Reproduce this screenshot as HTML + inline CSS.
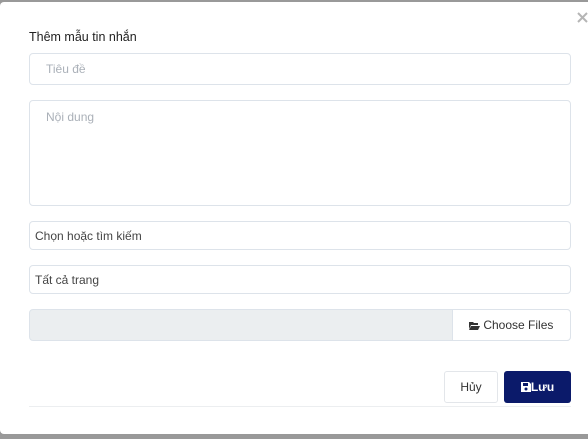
<!DOCTYPE html>
<html><head><meta charset="utf-8"><style>
*{box-sizing:border-box;margin:0;padding:0}
body{width:588px;height:439px;background:#999;font-family:"Liberation Sans",Arial,sans-serif;position:relative;overflow:hidden}
.m{position:absolute;left:0;top:2px;width:600px;height:432px;background:#fff;border-radius:4px}
.a{position:absolute;font-size:12px}
.in{position:absolute;left:29px;width:542px;border:1px solid #dde3ea;border-radius:4px;background:#fff;color:#444;font-size:12px}
.ph{color:#aab0b8}
</style></head><body>
<div class="m"></div>
<svg style="position:absolute;left:577px;top:12px" width="11" height="11" viewBox="0 0 11 11"><path d="M1 1L10 10M10 1L1 10" stroke="#b5b5b5" stroke-width="2"/></svg>
<div class="a" style="left:29px;top:30px;font-size:12.5px;color:#222">Thêm mẫu tin nhắn</div>
<div class="in ph" style="top:53px;height:32px;padding:8px 16px">Tiêu đề</div>
<div class="in ph" style="top:100px;height:106px;padding:9px 16px">Nội dung</div>
<div class="in" style="top:221px;height:29px;padding:7px 5px">Chọn hoặc tìm kiếm</div>
<div class="in" style="top:265px;height:29px;padding:7px 5px">Tất cả trang</div>
<div class="in" style="top:309px;height:32px;background:#ebeef0">
<div style="position:absolute;right:-1px;top:-1px;width:119px;height:32px;background:#fff;border:1px solid #dde3ea;border-radius:0 4px 4px 0;padding:8px 0 0 16px;color:#333"><svg width="11" height="9" viewBox="0 0 11 9" style="vertical-align:-1px"><path d="M0 1h4l1 1h4v2H2L0 8z M2 5h9l-2 4H0z" fill="#333"/></svg> Choose Files</div></div>
<div class="a" style="left:444px;top:371px;width:54px;height:32px;border:1px solid #e3e6ea;border-radius:3px;text-align:center;line-height:30px;color:#333">Hủy</div>
<div class="a" style="left:504px;top:371px;width:67px;height:32px;background:#0b1a6a;border-radius:3px;text-align:center;line-height:32px;color:#fff;font-weight:bold"><svg width="10" height="10" viewBox="0 0 10 10" style="vertical-align:-1px"><path d="M0 0h8l2 2v8H0z" fill="#fff"/><rect x="2" y="1" width="5" height="3" fill="#0b1a6a"/><circle cx="5" cy="7" r="1.5" fill="#0b1a6a"/></svg>Lưu</div>
<div style="position:absolute;left:29px;top:406px;width:542px;height:1px;background:#eceef0"></div>
</body></html>
